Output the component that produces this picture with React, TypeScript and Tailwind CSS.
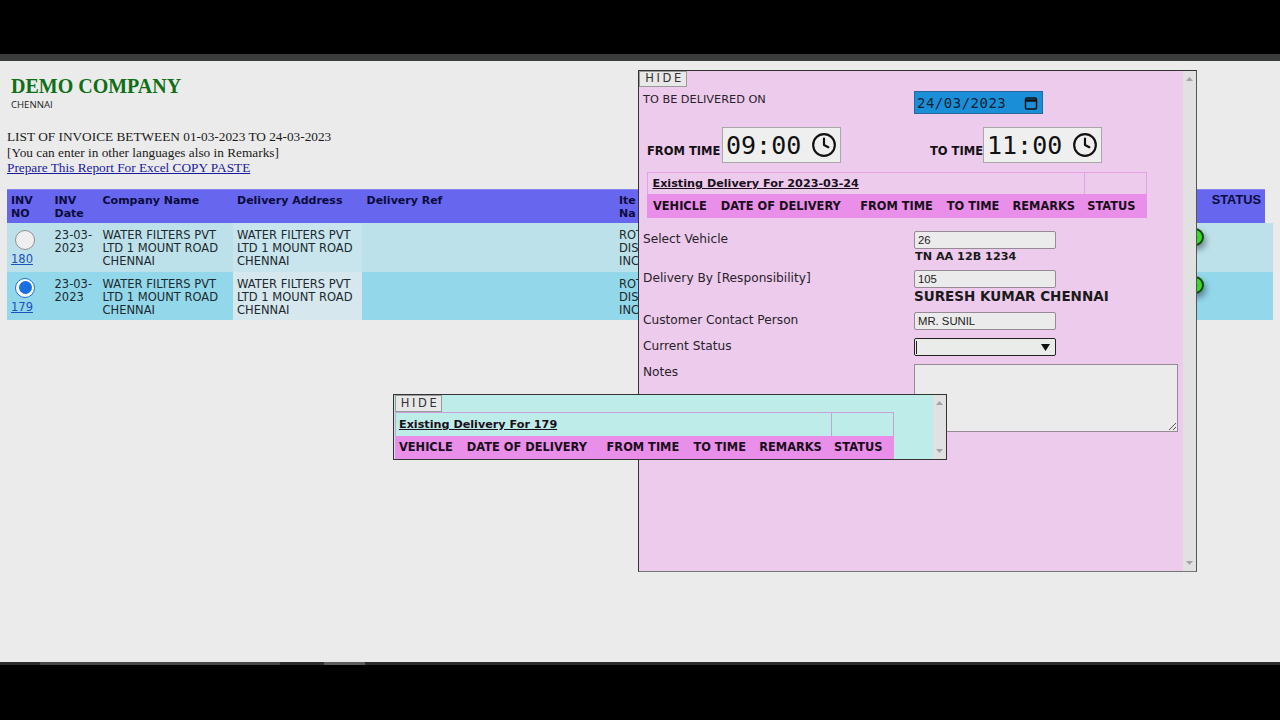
import { Clock } from 'lucide-react';

const ROWS = [
  { no: '180', checked: false, bg: 'bg-[#bde1ea]', addr: 'bg-[#c8e4ec]', radioTop: 'mt-[7px]', iconTop: 'pt-[5px]' },
  { no: '179', checked: true, bg: 'bg-[#92d7ea]', addr: 'bg-[#d6e7ee]', radioTop: 'mt-[6px]', iconTop: 'pt-[4px]' },
];

const DELIVERY_COLUMNS = [
  { label: 'VEHICLE', w: 'w-[68px]' },
  { label: 'DATE OF DELIVERY', w: 'w-[140px]' },
  { label: 'FROM TIME', w: 'w-[87px]' },
  { label: 'TO TIME', w: 'w-[66px]' },
  { label: 'REMARKS', w: 'w-[75px]' },
  { label: 'STATUS', w: 'w-[60px]' },
];

function Triangle({ up }: { up?: boolean }) {
  return (
    <svg width="9" height="6" viewBox="0 0 9 6" className="fill-[#a3a3a3]">
      <path d={up ? 'M4.5 1 L8 5 H1 Z' : 'M4.5 5 L8 1 H1 Z'} />
    </svg>
  );
}

function Scrollbar() {
  return (
    <div className="w-[13px] h-full shrink-0 bg-[#e1e1e1] flex flex-col items-center justify-between py-[5px]">
      <Triangle up />
      <Triangle />
    </div>
  );
}

function HideButton({ className }: { className: string }) {
  return (
    <div className={`${className} bg-[#e8e8e8] border border-[#9a9a9a] text-[#333] text-[11.5px] tracking-[2.6px] leading-none flex items-center justify-center pl-[3px]`}>
      HIDE
    </div>
  );
}

function TimeBox({ value }: { value: string }) {
  return (
    <div className="w-[119px] h-[36px] bg-[#efefef] border border-[#a8a8a8] flex items-center pl-[3px] gap-[10px]">
      <span className="font-['DejaVu_Sans_Mono'] font-normal text-[25px] leading-none text-[#111] w-[75px]">{value}</span>
      <Clock size={26} strokeWidth={2} className="text-[#111]" />
    </div>
  );
}

function DeliveryTable({ title, className, line, titleH, headH, titlePad, headPad }: { title: string; className: string; line: string; titleH: string; headH: string; titlePad: string; headPad: string }) {
  return (
    <div className={`${className} font-['DejaVu_Sans'] font-bold text-[11.4px] text-[#1a0f1a]`}>
      <div className={`flex ${titleH}`}>
        <div className={`flex-1 border-b-0 border-r-0 ${line} ${titlePad} flex items-center underline text-[11.2px]`}>{title}</div>
        <div className={`w-[63px] border-b-0 ${line}`} />
      </div>
      <div className={`flex ${headH} items-center bg-[#e98ee9] ${headPad}`}>
        {DELIVERY_COLUMNS.map((c) => (
          <div key={c.label} className={c.w}>{c.label}</div>
        ))}
      </div>
    </div>
  );
}

function FormInput({ value }: { value: string }) {
  return (
    <div className="w-[142px] h-[18px] bg-[#ebebeb] border border-[#958a95] rounded-[2px] font-['Liberation_Sans'] text-[11.3px] text-[#222] pl-[3px] flex items-center">
      {value}
    </div>
  );
}

export default function App() {
  return (
    <div className="relative w-[1280px] h-[720px] overflow-hidden bg-black flex flex-col font-['DejaVu_Sans'] text-[#111]">
      <div className="h-[54px] shrink-0 bg-black" />
      <div className="h-[7px] shrink-0 bg-[#3b3d3d]" />

      <main className="h-[601px] shrink-0 bg-[#ebebeb] pl-[7px]">
        <div className="pl-[4px] pt-[13px]">
          <h1 className="font-['Liberation_Serif'] font-bold text-[20px] leading-[24px] text-[#0f6f16]">DEMO COMPANY</h1>
          <p className="font-['Open_Sans'] text-[9.6px] leading-[14px] text-[#222]">CHENNAI</p>
        </div>
        <div className="mt-[17px] font-['Liberation_Serif'] text-[13.3px] leading-[15.5px] text-[#1a1a1a]">
          <p>LIST OF INVOICE BETWEEN 01-03-2023 TO 24-03-2023</p>
          <p>[You can enter in other languages also in Remarks]</p>
          <a href="#" className="underline text-[#1a1a9c]">Prepare This Report For Excel COPY PASTE</a>
        </div>

        <div className="mt-[13px] w-[1258px] h-[34px] bg-[#6666ee] border-t border-[#8585f0] flex font-bold text-[11px] leading-[13px] text-[#0c0c3c] pt-[4px]">
          <div className="w-[47.5px] pl-[4px]">INV<br />NO</div>
          <div className="w-[48px]">INV<br />Date</div>
          <div className="w-[134.5px]">Company Name</div>
          <div className="w-[129.5px]">Delivery Address</div>
          <div className="w-[252.5px]">Delivery Ref</div>
          <div className="w-[19px] whitespace-nowrap">Ite<br />Na</div>
          <div className="flex-1 pr-[4px] -mt-[1px] text-right font-['Liberation_Sans'] text-[12.8px]">STATUS</div>
        </div>

        {ROWS.map((r, i) => (
          <div key={r.no} className={`w-[1266px] ${i === 0 ? 'h-[49px]' : 'h-[48px]'} ${r.bg} flex text-[11.5px] leading-[13px] text-[#1c2a2e]`}>
            <div className="w-[47.5px] pl-[4px] flex flex-col">
              <div className={`${r.radioTop} ml-[4px] w-[20px] h-[20px] rounded-full border flex items-center justify-center ${r.checked ? 'border-[#1a6fe0] border-[1.5px] bg-white' : 'bg-[#efefef] border-[#8f8f8f]'}`}>
                {r.checked && <div className="w-[13px] h-[13px] rounded-full bg-[#1a6fe0]" />}
              </div>
              <a href="#" className="mt-[3px] underline text-[#1f50c0]">{r.no}</a>
            </div>
            <div className="w-[48px] pt-[6px]">23-03-<br />2023</div>
            <div className="w-[130.5px] pt-[6px]">WATER FILTERS PVT<br />LTD 1 MOUNT ROAD<br />CHENNAI</div>
            <div className={`w-[129px] pt-[6px] pl-[4px] ${r.addr}`}>WATER FILTERS PVT<br />LTD 1 MOUNT ROAD<br />CHENNAI</div>
            <div className="w-[257px]" />
            <div className="w-[19px] pt-[6px] whitespace-nowrap">ROT<br />DIS<br />INC</div>
            <div className="w-[548px]" />
            <div className={r.iconTop}>
              <div className="w-[18px] h-[18px] rounded-full bg-[#3bd92e] border-2 border-[#0a4a0a] shadow-[2px_4px_6px_rgba(0,0,0,0.4)] text-[9px] leading-none flex items-center justify-center text-[#0c3a0c]">$</div>
            </div>
          </div>
        ))}
      </main>

      <div className="h-[3px] shrink-0 bg-[#2c2c2c] flex">
        <div className="ml-[40px] w-[240px] bg-[#484848]" />
        <div className="ml-[44px] w-[41px] bg-[#5c5c5c]" />
      </div>
      <div className="flex-1 bg-black" />

      {/* delivery form panel */}
      <section className="absolute left-[638px] top-[70px] w-[559px] h-[502px] border border-[#333] border-b-[#777] border-r-[#555] bg-[#eccbec] flex text-[12.2px] text-[#2a222a]">
        <div className="flex-1 relative">
          <HideButton className="w-[48px] h-[16px]" />
          <div className="h-[40px] pl-[4px] flex">
            <div className="w-[271px] pt-[6px] leading-[14px] text-[11.3px]">TO BE DELIVERED ON</div>
            <div className="mt-[4px] w-[129px] h-[23px] bg-[#1a8fd8] border border-[#27689a] flex items-center pl-[2px] pr-[2px] justify-between">
              <span className="font-['DejaVu_Sans_Mono'] text-[14px] tracking-[0.5px] text-[#123] pt-[1px]">24/03/2023</span>
              <svg width="16" height="16" viewBox="0 0 16 16" fill="none" stroke="#111" strokeWidth="1.5" className="mr-[1px]">
                <rect x="2.5" y="3" width="11" height="11" rx="1" />
                <path d="M2.5 5.5 H13.5" strokeWidth="2.5" />
              </svg>
            </div>
          </div>
          <div className="h-[36px] flex items-center font-bold text-[11.5px] text-[#151015]">
            <div className="w-[83px] pl-[8px] pt-[14px] whitespace-nowrap">FROM TIME</div>
            <TimeBox value="09:00" />
            <div className="w-[142px] pl-[89px] pt-[14px] whitespace-nowrap">TO TIME</div>
            <TimeBox value="11:00" />
          </div>
          <div className="pl-[8px] mt-[9px]">
            <DeliveryTable
              title="Existing Delivery For 2023-03-24"
              className="w-[500px]"
              line="border-[1.5px] border-[#e5a2e5]"
              titleH="h-[22px]"
              headH="h-[24px]"
              titlePad="pl-[4.5px] pt-[2px]"
              headPad="pl-[6px] pt-[2px]"
            />
          </div>

          <div className="pl-[4px] mt-[13px] grid grid-cols-[271px_1fr] leading-[14px]">
            <div className="pt-[1px]">Select Vehicle</div>
            <div>
              <FormInput value="26" />
              <div className="font-bold text-[11.2px] mt-[1px] pl-[1px] text-[#1a1a1a]">TN AA 12B 1234</div>
            </div>
            <div className="mt-[7px]">Delivery By [Responsibility]</div>
            <div className="mt-[6px]">
              <FormInput value="105" />
              <div className="font-bold text-[13.5px] leading-[17px] text-[#1a1a1a]">SURESH KUMAR CHENNAI</div>
            </div>
            <div className="mt-[8px]">Customer Contact Person</div>
            <div className="mt-[7px]"><FormInput value="MR. SUNIL" /></div>
            <div className="mt-[9px]">Current Status</div>
            <div className="mt-[8px]">
              <div className="w-[142px] h-[18px] bg-[#e9ece8] border-[1.5px] border-[#222] rounded-[2px] flex items-center justify-between pl-[1px] pr-[5px]">
                <div className="w-[1px] h-[13px] bg-[#222]" />
                <svg width="9" height="7" viewBox="0 0 9 7"><path d="M0 0 H9 L4.5 7 Z" fill="#111" /></svg>
              </div>
            </div>
            <div className="mt-[9px]">Notes</div>
            <div className="mt-[8px]">
              <div className="relative w-[264px] h-[68px] bg-[#ebebeb] border border-[#958a95]">
                <svg width="9" height="9" viewBox="0 0 9 9" className="absolute right-0 bottom-0" stroke="#555" strokeWidth="1">
                  <path d="M1 8 L8 1 M5 8 L8 5" />
                </svg>
              </div>
            </div>
          </div>
        </div>
        <Scrollbar />
      </section>

      {/* existing delivery popup */}
      <section className="absolute left-[393px] top-[394px] w-[554px] h-[66px] border border-[#333] bg-[#beece8] flex">
        <div className="flex-1">
          <HideButton className="w-[47px] h-[17px] ml-[1px]" />
          <DeliveryTable
            title="Existing Delivery For 179"
            className="w-[499px] ml-[1px]"
            line="border border-[#c9a0d8]"
            titleH="h-[24px]"
            headH="h-[23px]"
            titlePad="pl-[3px] pt-[2px]"
            headPad="pl-[4px] pt-[1px]"
          />
        </div>
        <Scrollbar />
      </section>
    </div>
  );
}
